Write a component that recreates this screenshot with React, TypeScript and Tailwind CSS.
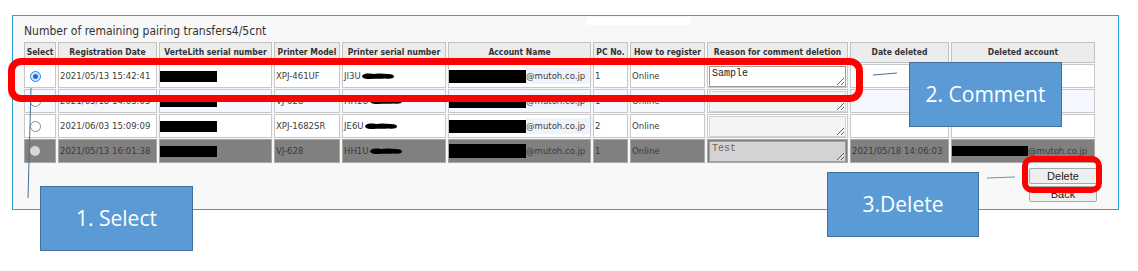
import React from "react";

const cellFont = "font-['DejaVu_Sans_Condensed','DejaVu_Sans',sans-serif]";

function Redact({ w, h }: { w: number; h: number }) {
  return <span className="inline-block bg-black shrink-0" style={{ width: w, height: h }} />;
}

function Blob() {
  return (
    <svg width="34" height="8" viewBox="0 0 34 8" className="shrink-0">
      <path d="M1 4 C3 1 8 1.5 12 2 C16 1 22 1.5 27 2 C31 2 33 3 33 4.5 C33 6.5 29 7 25 6.5 C20 7 14 6.5 9 7 C5 7 1 6.5 1 4 Z" fill="#000" />
    </svg>
  );
}

function Radio({ kind }: { kind: "on" | "off" | "disabled" }) {
  if (kind === "on")
    return (
      <span className="ml-[5px] w-[11px] h-[11px] rounded-full border border-[#2f7fdc] bg-[#d6e8fc] flex items-center justify-center">
        <span className="w-[5px] h-[5px] rounded-full bg-[#1a6fe0]" />
      </span>
    );
  if (kind === "off")
    return <span className="ml-[5px] w-[11px] h-[11px] rounded-full border border-[#8a8a8a] bg-white" />;
  return <span className="ml-[5px] w-[10px] h-[10px] rounded-full bg-[#d6d6d6]" />;
}

type Row = {
  radio: "on" | "off" | "disabled";
  date: string;
  model: string;
  serialPrefix: string;
  pc: string;
  reason: string;
  deletedDate: string;
  deletedAccount: boolean;
  tone: "white" | "blue" | "gray";
};

const rows: Row[] = [
  { radio: "on", date: "2021/05/13 15:42:41", model: "XPJ-461UF", serialPrefix: "JI3U", pc: "1", reason: "Sample", deletedDate: "", deletedAccount: false, tone: "white" },
  { radio: "off", date: "2021/05/18 14:05:05", model: "VJ-628", serialPrefix: "HH1U", pc: "1", reason: "", deletedDate: "", deletedAccount: false, tone: "blue" },
  { radio: "off", date: "2021/06/03 15:09:09", model: "XPJ-1682SR", serialPrefix: "JE6U", pc: "2", reason: "", deletedDate: "", deletedAccount: false, tone: "white" },
  { radio: "disabled", date: "2021/05/13 16:01:38", model: "VJ-628", serialPrefix: "HH1U", pc: "1", reason: "Test", deletedDate: "2021/05/18 14:06:03", deletedAccount: true, tone: "gray" },
];

const headers = [
  "Select",
  "Registration Date",
  "VerteLith serial number",
  "Printer Model",
  "Printer serial number",
  "Account Name",
  "PC No.",
  "How to register",
  "Reason for comment deletion",
  "Date deleted",
  "Deleted account",
];

export default function App() {
  return (
    <div className="relative w-[1138px] h-[271px] bg-white overflow-hidden pt-[15px] pl-[12px]">
      {/* Panel */}
      <div className="w-[1107px] h-[195px] border border-[#2aa3dc] bg-[#f8f8f8] pl-[11px] pt-[8px]">
        <div className={`${cellFont} text-[12px] leading-[14px] text-[#333]`}>
          Number of remaining pairing transfers4/5cnt
        </div>

        <div
          className={`${cellFont} mt-[4px] grid grid-cols-[32px_99px_113px_66px_104px_143px_35px_75px_141px_99px_144px] grid-rows-[21px_24px_24px_24px_24px] gap-x-[2px] gap-y-[1px] text-[9.5px] text-[#333]`}
        >
          {headers.map((h) => (
            <div
              key={h}
              className="border border-[#c2c2c2] bg-[#ececec] flex items-center justify-center font-bold text-[8.5px] whitespace-nowrap overflow-hidden"
            >
              {h}
            </div>
          ))}

          {rows.map((r, i) => {
            const bg =
              r.tone === "white" ? "bg-white" : r.tone === "blue" ? "bg-[#f4f7fd]" : "bg-[#808080]";
            const bd = r.tone === "gray" ? "border-[#a8a8a8]" : "border-[#c8c8c8]";
            const txt = r.tone === "gray" ? "text-[#3a3a3a]" : "text-[#3c3c3c]";
            const cell = `border ${bd} ${bg} ${txt} flex items-center whitespace-nowrap overflow-hidden`;
            const taCls =
              r.tone === "gray"
                ? "bg-[#d3d3d3] border-[#a0a0a0] text-[#6a6a6a]"
                : r.reason
                ? "bg-white border-[#9a9a9a] text-[#222]"
                : "bg-[#f4f4f4] border-[#d2d2d2] text-[#222]";
            return (
              <React.Fragment key={i}>
                <div className={cell}>
                  <Radio kind={r.radio} />
                </div>
                <div className={`${cell} pl-[1px]`}>{r.date}</div>
                <div className={cell}>
                  <Redact w={57} h={11} />
                </div>
                <div className={`${cell} pl-[1px]`}>{r.model}</div>
                <div className={`${cell} pl-[1px]`}>
                  <span>{r.serialPrefix}</span>
                  <Blob />
                </div>
                <div className={cell}>
                  <Redact w={77} h={r.tone === "gray" ? 14 : 13} />
                  <span
                    className={`h-[16px] pr-[7px] flex items-center ${
                      r.tone === "gray" ? "" : "bg-[#eef3fc]"
                    }`}
                  >
                    @mutoh.co.jp
                  </span>
                </div>
                <div className={`${cell} pl-[1px]`}>{r.pc}</div>
                <div className={`${cell} pl-[1px]`}>Online</div>
                <div className={`${cell} px-[1px] py-[1px]`}>
                  <textarea
                    readOnly
                    value={r.reason}
                    className={`w-full h-[21px] border ${taCls} font-['Liberation_Mono',monospace] text-[10px] leading-[11px] px-[2px] py-[1px] overflow-hidden outline-none`}
                  />
                </div>
                <div className={`${cell} pl-[1px]`}>{r.deletedDate}</div>
                <div className={cell}>
                  {r.deletedAccount ? (
                    <>
                      <Redact w={76} h={10} />
                      <span>@mutoh.co.jp</span>
                    </>
                  ) : null}
                </div>
              </React.Fragment>
            );
          })}
        </div>

        <div className="w-[1073px] mt-[5px] flex flex-col items-end gap-[2px]">
          <button className="w-[68px] h-[16px] border border-[#a9a9a9] rounded-[2px] bg-[#efefef] font-['Liberation_Sans',sans-serif] text-[11px] leading-[14px] text-[#222]">
            Delete
          </button>
          <button className="w-[68px] h-[16px] border border-[#a9a9a9] rounded-[2px] bg-[#efefef] font-['Liberation_Sans',sans-serif] text-[11px] leading-[14px] text-[#222]">
            Back
          </button>
        </div>
      </div>

      {/* small white bar */}
      <div className="absolute left-[587px] top-[17px] w-[104px] h-[8px] bg-white" />

      {/* connector lines */}
      <svg className="absolute left-0 top-0 pointer-events-none" width="1138" height="271">
        <line x1="31" y1="88" x2="28" y2="198" stroke="#41719c" strokeWidth="1" />
        <line x1="873" y1="75" x2="897" y2="73" stroke="#41719c" strokeWidth="1" />
        <line x1="987" y1="178" x2="1015" y2="177" stroke="#6f93bd" strokeWidth="1" />
      </svg>

      {/* red highlight rings */}
      <div className="absolute left-[8px] top-[58px] w-[855px] h-[44px] border-[7px] border-[#ff0000] rounded-[13px]" />
      <div className="absolute left-[1022px] top-[156px] w-[80px] h-[37px] border-[6px] border-[#ff0000] rounded-[10px]" />

      {/* callouts */}
      <div className="absolute left-[40px] top-[186px] w-[153px] h-[65px] bg-[#5b9bd5] border border-[#41719c] flex items-center justify-center font-['Open_Sans',sans-serif] text-[21px] text-white">
        1. Select
      </div>
      <div className="absolute left-[909px] top-[62px] w-[153px] h-[65px] bg-[#5b9bd5] border border-[#41719c] flex items-center justify-center font-['Open_Sans',sans-serif] text-[21px] text-white">
        2. Comment
      </div>
      <div className="absolute left-[827px] top-[172px] w-[152px] h-[65px] bg-[#5b9bd5] border border-[#41719c] flex items-center justify-center font-['Open_Sans',sans-serif] text-[21px] text-white">
        3.Delete
      </div>
    </div>
  );
}
